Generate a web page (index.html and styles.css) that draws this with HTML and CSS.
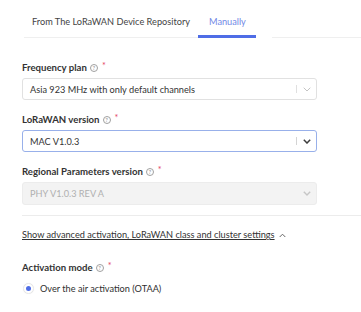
FILE: index.html
```html
<!DOCTYPE html>
<html>
<head>
<meta charset="utf-8">
<link rel="stylesheet" href="styles.css">
</head>
<body>
<div class="page">
  <div class="tabs">
    <div class="tab">From The LoRaWAN Device Repository</div>
    <div class="tab active">Manually</div>
    <div class="tab-fill"></div>
  </div>

  <div class="field first">
    <div class="label">Frequency plan <span class="help">?</span><span class="req">*</span></div>
    <div class="select">
      <span class="value">Asia 923 MHz with only default channels</span>
      <span class="sep"></span>
      <svg class="chev" width="8" height="5" viewBox="0 0 8 5"><path d="M0.7 0.7l3.3 3.3 3.3-3.3" fill="none" stroke="#c4c4c4" stroke-width="1"/></svg>
    </div>
  </div>

  <div class="field">
    <div class="label">LoRaWAN version <span class="help">?</span><span class="req">*</span></div>
    <div class="select focused">
      <span class="value">MAC V1.0.3</span>
      <span class="sep"></span>
      <svg class="chev" width="8" height="5" viewBox="0 0 8 5"><path d="M0.8 0.8l3.2 3.2 3.2-3.2" fill="none" stroke="#3c3c3c" stroke-width="1.5"/></svg>
    </div>
  </div>

  <div class="field">
    <div class="label">Regional Parameters version <span class="help">?</span><span class="req">*</span></div>
    <div class="select disabled">
      <span class="value">PHY V1.0.3 REV A</span>
      <svg class="chev" width="8" height="5" viewBox="0 0 8 5"><path d="M0.8 0.8l3.2 3.2 3.2-3.2" fill="none" stroke="#c6c6c6" stroke-width="1.4"/></svg>
    </div>
  </div>

  <div class="divider"></div>

  <div class="advanced"><span class="link">Show advanced activation, LoRaWAN class and cluster settings</span>
    <svg class="up" width="7" height="5" viewBox="0 0 7 5"><path d="M0.7 4l2.8-2.8 2.8 2.8" fill="none" stroke="#666" stroke-width="1"/></svg>
  </div>

  <div class="field act">
    <div class="label">Activation mode <span class="help">?</span><span class="req">*</span></div>
    <div class="radio-row"><span class="radio"><span class="dot"></span></span><span>Over the air activation (OTAA)</span></div>
  </div>
</div>
</body>
</html>
```

FILE: styles.css
```css
* { box-sizing: border-box; }
html, body { margin: 0; padding: 0; background: #fff; }
body { font-family: Lato, "Open Sans", sans-serif; font-size: 9.2px; color: #2f2f2f; width: 361px; height: 312px; overflow: hidden; }
.page { padding-left: 22px; }
.tabs { display: flex; height: 38px; margin-left: 2px; }
.tab { padding: 16px 8px 0 8px; line-height: 12px; color: #444; border-bottom: 1px solid #efefef; }
.tab.active { color: #7088e6; border-bottom: 3px solid #4f6de6; padding: 16px 10px 0 11px; }
.tab-fill { flex: 1; border-bottom: 1px solid #efefef; margin-left: 16px; }
.field { margin-top: 14px; }
.field.first { margin-top: 24px; }
.label { font-weight: bold; font-size: 9.6px; color: #333; height: 12px; line-height: 12px; display: flex; align-items: center; }
.help { display: inline-flex; width: 8px; height: 8px; border: 1px solid #a0a0a0; border-radius: 50%; font-size: 6px; line-height: 6px; font-weight: normal; color: #8f8f8f; align-items: center; justify-content: center; margin-left: 3px; }
.req { color: #e4435f; font-weight: normal; align-self: flex-start; margin-top: -2px; margin-left: 4px; font-size: 9px; }
.select { margin-top: 4px; width: 295px; height: 22px; border: 1px solid #e1e1e1; border-radius: 3px; display: flex; align-items: center; padding-left: 7px; color: #333; }
.select .value { flex: 1; }
.sep { width: 1px; height: 8px; background: #e0e0e0; margin-right: 6px; }
.chev { margin-right: 5px; }
.select.focused { border-color: #98b0ea; }
.select.focused .sep { background: #d4d4d4; }
.select.disabled { background: #f3f3f3; border-color: #ececec; color: #b0b0b0; height: 23px; }
.divider { margin-top: 10px; height: 1px; background: #ececec; }
.advanced { margin-top: 12px; height: 14px; line-height: 14px; color: #333; display: flex; align-items: center; gap: 4px; }
.link { text-decoration: underline; text-underline-offset: 1px; }
.field.act { margin-top: 20px; }
.radio-row { margin-top: 7px; height: 14px; display: flex; align-items: center; gap: 6px; padding-left: 1px; }
.radio { width: 11px; height: 11px; border-radius: 50%; border: 1px solid #e6e6e6; box-shadow: 0 0 1px rgba(0,0,0,0.08); display: inline-flex; align-items: center; justify-content: center; }
.dot { width: 5px; height: 5px; border-radius: 50%; background: #4f6de6; }
```
